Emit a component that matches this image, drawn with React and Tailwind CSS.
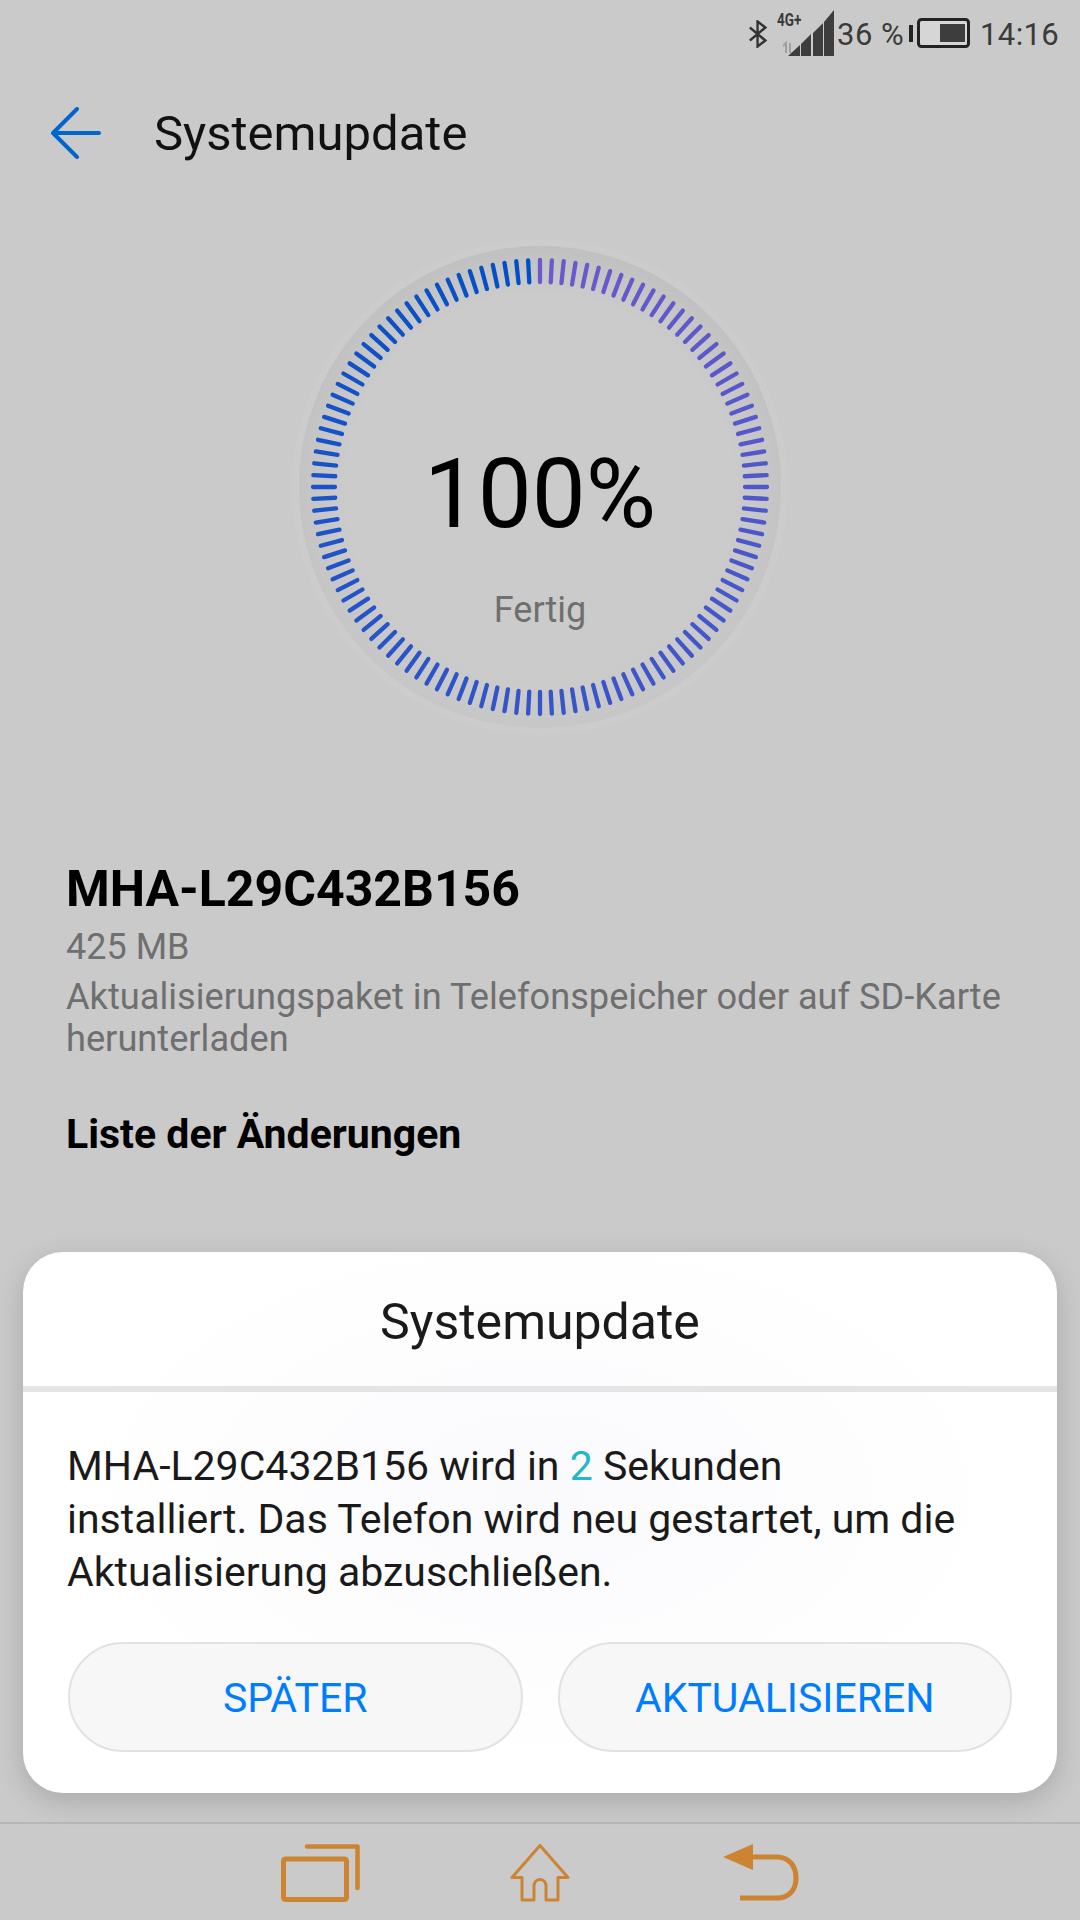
const ticks = Array.from({ length: 120 }, (_, i) => i);

// purple at the top going round clockwise to blue at the top left
function tickColor(i) {
    const t = i / 119;
    const r = Math.round(106 + (0 - 106) * t);
    const g = Math.round(90 + (80 - 90) * t);
    const b = Math.round(205 + (200 - 205) * t);
    return `rgb(${r},${g},${b})`;
}

function ProgressDial() {
    return (
        <div className="relative h-[500px] w-[500px]">
            <svg width="500" height="500" viewBox="-250 -250 500 500" className="absolute inset-0">
                <defs>
                    <linearGradient id="dialEdge" x1="0" y1="0" x2="0" y2="1">
                        <stop offset="0" stopColor="#c0c0c0" />
                        <stop offset="1" stopColor="#c7c7c7" />
                    </linearGradient>
                    <radialGradient id="dialFade" gradientUnits="userSpaceOnUse" cx="0" cy="0" r="241">
                        <stop offset="0.8" stopColor="#cbcbcb" />
                        <stop offset="1" stopColor="#cbcbcb" stopOpacity="0" />
                    </radialGradient>
                </defs>
                <circle r="248" fill="#cccccc" />
                <circle r="241" fill="url(#dialEdge)" />
                <circle r="241" fill="url(#dialFade)" />
                {ticks.map((i) => (
                    <line
                        key={i}
                        x1="0"
                        y1="-227"
                        x2="0"
                        y2="-205"
                        stroke={tickColor(i)}
                        strokeWidth="4.3"
                        strokeLinecap="round"
                        transform={`rotate(${i * 3})`}
                    />
                ))}
            </svg>
            <div className="relative flex h-full flex-col items-center pt-[209px]">
                <div className="text-[96px] leading-[96px] text-black">100%</div>
                <div className="mt-[48px] text-[36px] leading-[40px] text-[#6f6f6f]">Fertig</div>
            </div>
        </div>
    );
}

function StatusBar() {
    return (
        <div className="flex h-[66px] items-center justify-end pr-[23px] pt-[2px] text-[#3a3a3a]">
            <svg width="20" height="28" viewBox="0 0 22 28" preserveAspectRatio="none" fill="none" stroke="#333" strokeWidth="2.6">
                <path d="M2 7.5 19 20.5 10.5 26.5V1.5L19 7.5 2 20.5" />
            </svg>
            <div className="relative mb-[2px] ml-[9px] h-[46px] w-[57px]">
                <span className="absolute left-0 top-[1px] origin-left scale-x-75 whitespace-nowrap text-[18px] font-bold leading-[18px] text-[#3a3a3a]">4G+</span>
                <svg width="57" height="46" viewBox="0 0 57 46" className="absolute left-0 top-0">
                    <path d="M11 46 23 35V46Z M24 46V34L34 24V46Z M36 46V23L46 13V46Z M47 46V12L57 0V46Z" fill="#3d3d3d" />
                    <path d="M9 43V33L6 36M13 33V43" fill="none" stroke="#a0a0a0" strokeWidth="2" />
                </svg>
            </div>
            <span className="ml-[3px] w-[67px] whitespace-nowrap text-[31px] leading-none tracking-[0.5px]">36 %</span>
            <svg width="61" height="30" viewBox="0 0 61 30" className="ml-[5px] mb-[2px]">
                <rect x="0" y="7" width="4" height="17" fill="#222" />
                <rect x="9.5" y="1.5" width="50" height="27" rx="3" fill="#d6d6d6" stroke="#222" strokeWidth="3" />
                <rect x="31" y="6" width="25" height="18" fill="#3d3d3d" />
            </svg>
            <span className="ml-[10px] w-[77px] whitespace-nowrap text-[31px] leading-none tracking-[0.4px]">14:16</span>
        </div>
    );
}

function NavBar() {
    const color = "#cc8433";
    return (
        <div className="flex h-[98px] items-start border-t-2 border-[#b6b6b6] pt-[20px]">
            <div className="ml-[281px] h-[58px] w-[80px]">
                <svg width="80" height="58" viewBox="0 0 80 58" fill="none" stroke={color}>
                    <rect x="2.5" y="15" width="63" height="40.5" rx="2" strokeWidth="5" />
                    <path d="M26 2.5H76.5V44" strokeWidth="4.5" strokeLinecap="round" strokeLinejoin="round" />
                </svg>
            </div>
            <div className="ml-[149px] h-[58px] w-[60px]">
                <svg width="60" height="58" viewBox="0 0 60 58" fill="none" stroke={color} strokeWidth="3" strokeLinejoin="round">
                    <path d="M30 1.5 2 33.5H12V56H24V41.5A6 6 0 0 1 36 41.5V56H48V33.5H58Z" />
                </svg>
            </div>
            <div className="ml-[153px] h-[58px] w-[76px]">
                <svg width="76" height="58" viewBox="0 0 76 58">
                    <path d="M0 13 30 0V26Z" fill={color} />
                    <path d="M28 13H54C66 13 73 22 73 34 73 46 66 54 54 54H17" fill="none" stroke={color} strokeWidth="5" />
                </svg>
            </div>
        </div>
    );
}

export default function App() {
    return (
        <div className="relative flex h-[1920px] w-[1080px] flex-col overflow-hidden bg-[#cacaca] font-['Roboto',sans-serif]">
            <StatusBar />

            {/* Header */}
            <div className="flex h-[134px] items-center">
                <svg width="50" height="52" viewBox="0 0 50 52" fill="none" stroke="#0066cc" strokeWidth="4" strokeLinecap="round" strokeLinejoin="round" className="ml-[51px]">
                    <path d="M2 26H48M26 2 2 26 26 50" />
                </svg>
                <h1 className="ml-[53px] text-[49px] leading-none text-[#111111]">Systemupdate</h1>
            </div>

            <div className="mt-[37px] flex justify-center">
                <ProgressDial />
            </div>

            {/* Update info */}
            <div className="mt-[124px] px-[66px]">
                <div className="text-[50px] font-bold leading-[56px] text-black">MHA-L29C432B156</div>
                <div className="mt-[10px] text-[36px] leading-[40px] text-[#6f6f6f]">425 MB</div>
                <div className="mt-[9px] w-[980px] text-[36.2px] leading-[42px] text-[#6f6f6f]">
                    Aktualisierungspaket in Telefonspeicher oder auf SD-Karte herunterladen
                </div>
                <div className="mt-[52px] text-[41px] font-bold leading-[44px] text-black">Liste der Änderungen</div>
            </div>

            {/* Dialog */}
            <div className="absolute left-[23px] top-[1252px] h-[541px] w-[1034px] rounded-[40px] bg-white bg-[radial-gradient(ellipse_at_50%_45%,#fafafd_0%,#ffffff_65%)] shadow-[0_8px_28px_rgba(0,0,0,0.16)]">
                <div className="flex h-[134px] items-center justify-center pt-[6px] text-[50px] text-[#1a1a1a]">Systemupdate</div>
                <div className="h-[6px] bg-[#e4e4e4]" />
                <div className="ml-[44px] w-[900px] pt-[48px] text-[41px] leading-[53px] text-[#1a1a1a]">
                    MHA-L29C432B156 wird in <span className="text-[#22b8c4]">2</span> Sekunden installiert. Das Telefon wird neu gestartet, um die Aktualisierung abzuschließen.
                </div>
                <div className="mt-[43px] flex gap-[35px] px-[45px]">
                    <button className="h-[110px] w-[455px] rounded-full border-2 border-[#e2e2e2] bg-[#f7f7f7] pt-[4px] text-[41px] text-[#007dff]">SPÄTER</button>
                    <button className="h-[110px] w-[455px] rounded-full border-2 border-[#e2e2e2] bg-[#f7f7f7] pt-[4px] text-[41px] text-[#007dff]">AKTUALISIEREN</button>
                </div>
            </div>

            <div className="mt-auto">
                <NavBar />
            </div>
        </div>
    );
}
